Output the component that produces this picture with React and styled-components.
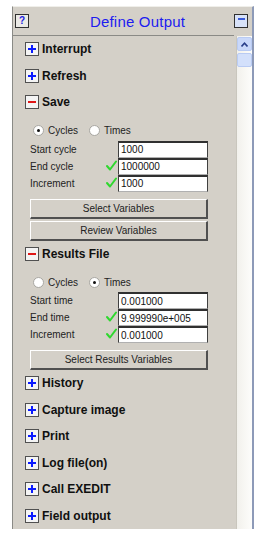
import React from 'react';
import styled, { createGlobalStyle } from 'styled-components';

const GlobalStyle = createGlobalStyle`
   body {
      margin: 0;
      background: #ffffff;
      font-family: "Liberation Sans", Arial, sans-serif;
   }
`;

const Window = styled.div`
   margin: 6px 0 0 12px;
   width: 239px;
   background: #d4d0c8;
   border-top: 1px solid #f0efea;
   border-left: 1px solid #8a8a86;
   border-right: 2px solid #8d9ab8;
   display: flex;
   flex-direction: column;
`;

const TitleBar = styled.div`
   height: 28px;
   display: flex;
   align-items: center;
   justify-content: space-between;
   padding: 0 2px 0 2px;
   border-bottom: 1px solid #8a8a86;
   margin-right: 18px;
`;

const TitleText = styled.div`
   font-size: 15px;
   color: #1c1cf0;
   letter-spacing: 0.2px;
   margin-left: 12px;
`;

const SmallButton = styled.div`
   width: 12px;
   height: 12px;
   border: 1px solid #303030;
   background: ${p => (p.$blue ? '#d8e2f8' : '#ebeae6')};
   display: flex;
   align-items: center;
   justify-content: center;
   font-size: 10px;
   font-weight: bold;
   color: #2020e0;
   line-height: 1;
   margin-right: ${p => (p.$right ? '-16px' : '0')};
`;

const MinusGlyph = styled.div`
   width: 7px;
   height: 2px;
   background: #3a5bd8;
   margin-bottom: 5px;
`;

const Body = styled.div`
   display: flex;
`;

const Content = styled.div`
   flex: 1;
   padding-left: 12px;
   border-right: 1px solid #c9c6bd;
`;

const Scrollbar = styled.div`
   width: 15px;
   background: linear-gradient(to right, #f2f1ec, #fdfdfb);
   display: flex;
   flex-direction: column;
   align-items: center;
   padding-top: 1px;
   gap: 2px;
`;

const ScrollPart = styled.div`
   width: 13px;
   height: ${p => p.$h}px;
   border-radius: 2px;
   background: ${p => p.$bg};
   border: 1px solid #b9cbf3;
   display: flex;
   align-items: center;
   justify-content: center;
`;

const Header = styled.div`
   height: 26.5px;
   display: flex;
   align-items: center;
   gap: 3px;
   font-size: 12px;
   font-weight: bold;
   color: #101010;
`;

const ToggleBox = styled.div`
   width: 12px;
   height: 12px;
   border: 1px solid #505050;
   background: #f4f4f4;
   position: relative;
   flex-shrink: 0;

   &::before, &::after {
      content: '';
      position: absolute;
      background: ${p => (p.$open ? '#e01818' : '#0a1aff')};
   }
   &::before {
      left: 2px;
      top: 5px;
      width: 8px;
      height: 2px;
   }
   &::after {
      display: ${p => (p.$open ? 'none' : 'block')};
      left: 5px;
      top: 2px;
      width: 2px;
      height: 8px;
   }
`;

const Section = styled.div`
   padding: 7px 0 0 5px;
   width: 178px;
   font-size: 10px;
   color: #222;
`;

const RadioRow = styled.div`
   height: 16px;
   display: flex;
   align-items: center;
   padding-left: 3px;
   margin-bottom: 2px;
`;

const RadioItem = styled.label`
   display: flex;
   align-items: center;
   gap: 4px;
   width: 56px;
`;

const RadioCircle = styled.span`
   width: 9px;
   height: 9px;
   border-radius: 50%;
   background: #fff;
   border: 1px solid #a8a7a2;
   display: flex;
   align-items: center;
   justify-content: center;

   &::after {
      content: '';
      display: ${p => (p.$on ? 'block' : 'none')};
      width: 3px;
      height: 3px;
      border-radius: 50%;
      background: #111;
   }
`;

const FieldGrid = styled.div`
   display: grid;
   grid-template-columns: 76px 12px 90px;
   grid-auto-rows: 17px;
   align-items: center;
`;

const Input = styled.div`
   height: 17px;
   box-sizing: border-box;
   background: #fff;
   border-top: 2px solid #303030;
   border-left: 1px solid #404040;
   border-right: 1px solid #404040;
   border-bottom: 1px solid #b0b0b0;
   padding-left: 2px;
   display: flex;
   align-items: center;
   font-size: 10px;
   color: #111;
`;

const ButtonStack = styled.div`
   margin-top: 7px;
   display: flex;
   flex-direction: column;
   gap: 2px;
`;

const Button = styled.div`
   height: 20px;
   box-sizing: border-box;
   background: #d4d0c8;
   border-top: 1px solid #ffffff;
   border-left: 1px solid #ffffff;
   border-right: 2px solid #505050;
   border-bottom: 2px solid #505050;
   display: flex;
   align-items: center;
   justify-content: center;
   font-size: 10px;
   color: #222;
`;

const Check = () => (
   <svg width="11" height="11" viewBox="0 0 11 11">
      <path d="M1 6 L4 9.5 L10 1.5" fill="none" stroke="#2ed82e" strokeWidth="2" strokeLinecap="round" strokeLinejoin="round" />
   </svg>
);

function Fields({ rows }) {
   return (
      <FieldGrid>
         {rows.map(r => (
            <React.Fragment key={r.label}>
               <span>{r.label}</span>
               <span>{r.check && <Check />}</span>
               <Input>{r.value}</Input>
            </React.Fragment>
         ))}
      </FieldGrid>
   );
}

function Radios({ cycles }) {
   return (
      <RadioRow>
         <RadioItem><RadioCircle $on={cycles} />Cycles</RadioItem>
         <RadioItem><RadioCircle $on={!cycles} />Times</RadioItem>
      </RadioRow>
   );
}

function Item({ label, open }) {
   return (
      <Header>
         <ToggleBox $open={open} />
         {label}
      </Header>
   );
}

export default function App() {
   return (
      <>
         <GlobalStyle />
         <Window>
            <TitleBar>
               <SmallButton>?</SmallButton>
               <TitleText>Define Output</TitleText>
               <SmallButton $blue $right><MinusGlyph /></SmallButton>
            </TitleBar>
            <Body>
               <Content>
                  <Item label="Interrupt" />
                  <Item label="Refresh" />
                  <Item label="Save" open />
                  <Section>
                     <Radios cycles />
                     <Fields rows={[
                        { label: 'Start cycle', value: '1000' },
                        { label: 'End cycle', value: '1000000', check: true },
                        { label: 'Increment', value: '1000', check: true },
                     ]} />
                     <ButtonStack>
                        <Button>Select Variables</Button>
                        <Button>Review Variables</Button>
                     </ButtonStack>
                  </Section>
                  <Item label="Results File" open />
                  <Section>
                     <Radios cycles={false} />
                     <Fields rows={[
                        { label: 'Start time', value: '0.001000' },
                        { label: 'End time', value: '9.999990e+005', check: true },
                        { label: 'Increment', value: '0.001000', check: true },
                     ]} />
                     <ButtonStack>
                        <Button>Select Results Variables</Button>
                     </ButtonStack>
                  </Section>
                  <Item label="History" />
                  <Item label="Capture image" />
                  <Item label="Print" />
                  <Item label="Log file(on)" />
                  <Item label="Call EXEDIT" />
                  <Item label="Field output" />
               </Content>
               <Scrollbar>
                  <ScrollPart $h={12} $bg="#c9d8fa">
                     <svg width="7" height="5" viewBox="0 0 7 5">
                        <path d="M0.5 4.5 L3.5 1.2 L6.5 4.5" fill="none" stroke="#2a3f8a" strokeWidth="1.6" />
                     </svg>
                  </ScrollPart>
                  <ScrollPart $h={12} $bg="#d3e0fb" />
               </Scrollbar>
            </Body>
         </Window>
      </>
   );
}
